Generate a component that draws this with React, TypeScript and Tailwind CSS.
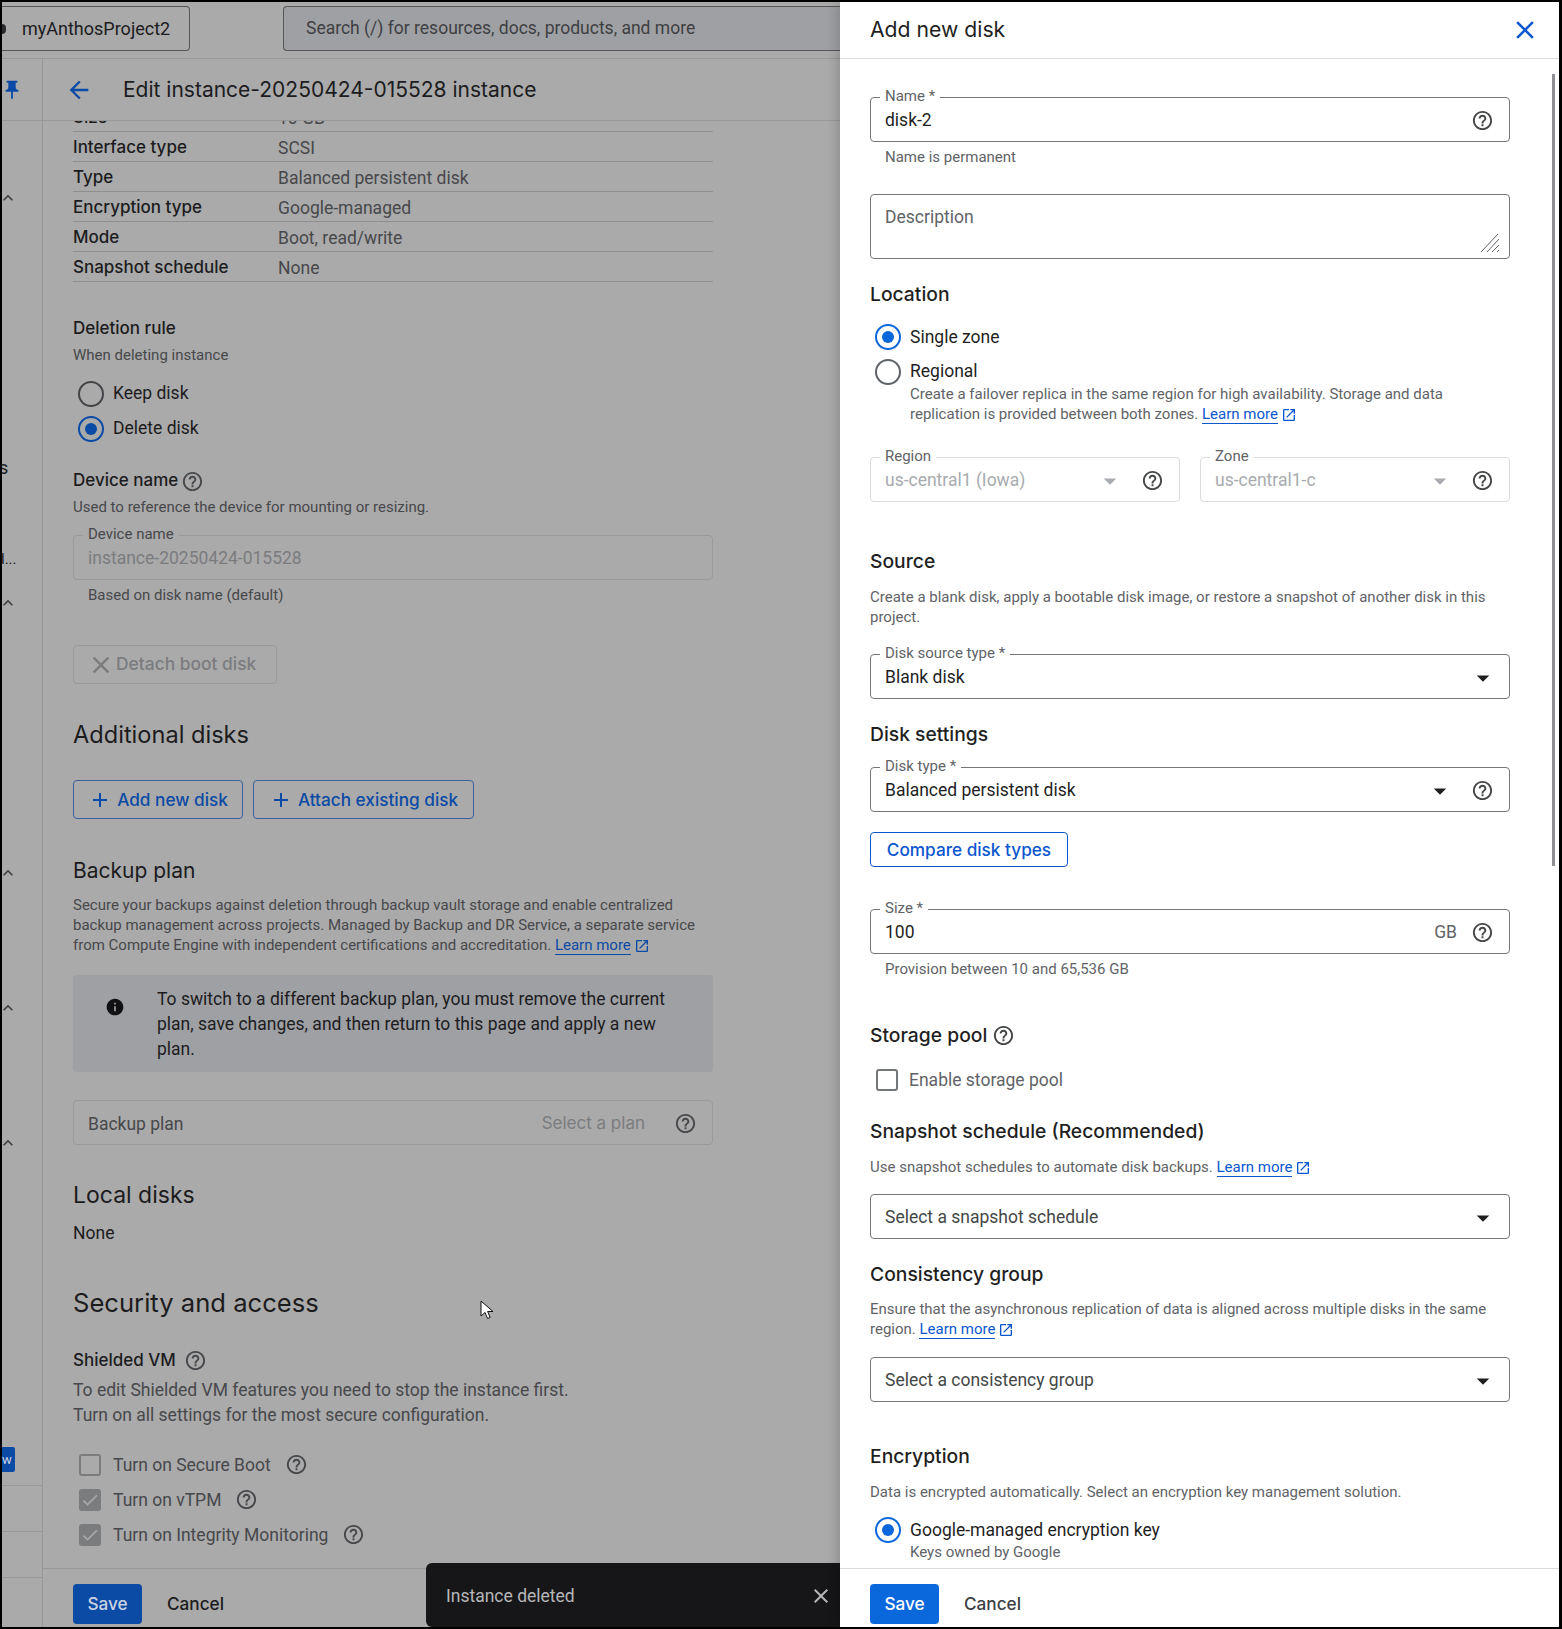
import type { ReactNode } from "react"
import {
  MdAdd,
  MdArrowBack,
  MdArrowDropDown,
  MdCheck,
  MdClose,
  MdExpandLess,
  MdHelpOutline,
  MdInfo,
  MdOpenInNew,
  MdPushPin,
} from "react-icons/md"

function Field({
  label,
  children,
  height = "h-[45px]",
  border = "border-[#74777a]",
  labelColor = "text-[#5f6368]",
  labelBg = "bg-white",
}: {
  label?: string
  children: ReactNode
  height?: string
  border?: string
  labelColor?: string
  labelBg?: string
}) {
  return (
    <div className={`relative flex items-center rounded border pt-[2px] pr-[15px] pl-[14px] ${height} ${border}`}>
      {label && (
        <span className={`absolute -top-[12px] left-[9px] px-[5px] text-[15px] leading-[20px] ${labelBg} ${labelColor}`}>
          {label}
        </span>
      )}
      {children}
    </div>
  )
}

function Radio({ checked, dim }: { checked?: boolean; dim?: boolean }) {
  if (checked) {
    return (
      <span className={`flex h-[26px] w-[26px] shrink-0 items-center justify-center rounded-full border-[2px] ${dim ? "border-[#0b4aa5]" : "border-[#0b67dc]"}`}>
        <span className={`h-[12px] w-[12px] rounded-full ${dim ? "bg-[#0b4aa5]" : "bg-[#0b67dc]"}`} />
      </span>
    )
  }
  return <span className={`h-[26px] w-[26px] shrink-0 rounded-full border-[2px] ${dim ? "border-[#444548]" : "border-[#5f6368]"}`} />
}

function LearnMore({ dim }: { dim?: boolean }) {
  const color = dim ? "text-[#0b4aa5]" : "text-[#0b57d0]"
  return (
    <span className={`inline-flex items-center ${color}`}>
      <span className={`border-b leading-[17px] ${dim ? "border-[#0b4aa5]" : "border-[#0b57d0]"}`}>Learn more</span>
      <MdOpenInNew className="ml-[3px] text-[16px]" />
    </span>
  )
}

const DISK_ROWS = [
  ["Size", "10 GB"],
  ["Interface type", "SCSI"],
  ["Type", "Balanced persistent disk"],
  ["Encryption type", "Google-managed"],
  ["Mode", "Boot, read/write"],
  ["Snapshot schedule", "None"],
]

function Sidebar() {
  const chevron = "-ml-[4px] h-5 shrink-0 text-[20px] text-[#3f4043]"
  return (
    <div className="flex w-[41px] shrink-0 flex-col overflow-hidden border-r border-[#979797] text-[#1c1c1e]">
      <div className="flex h-[62px] items-center border-b border-[#979797]">
        <MdPushPin className="-ml-[1px] text-[22px] text-[#0b4aa5]" />
      </div>
      <MdExpandLess className={`mt-[67px] ${chevron}`} />
      <div className="mt-[250px] -ml-[3px] h-5 text-[18px] leading-5">s</div>
      <div className="mt-[71px] -ml-[1px] h-5 text-[15px] leading-5">l...</div>
      <MdExpandLess className={`mt-[24px] ${chevron}`} />
      <MdExpandLess className={`mt-[250px] ${chevron}`} />
      <MdExpandLess className={`mt-[115px] ${chevron}`} />
      <MdExpandLess className={`mt-[115px] ${chevron}`} />
      <div className="mt-[294px] flex h-[25px] w-[13px] items-center rounded-r-[2px] bg-[#0b4aa5] text-[13px] text-[#c9d3e4]">w</div>
      <div className="mt-[13px] h-px bg-[#979797]" />
      <div className="mt-[45px] h-px bg-[#979797]" />
      <div className="mt-[45px] h-px bg-[#979797]" />
    </div>
  )
}

function LeftContent() {
  const sub = "text-[15px] leading-5 text-[#47484b]"
  const label = "font-['Inter',sans-serif] text-[17px] font-medium"
  return (
    <div className="-mt-[19px] w-[640px] text-[17.5px] text-[#1c1c1e]">
      {DISK_ROWS.map(([k, v]) => (
        <div key={k} className="flex h-[30px] items-center border-b border-[#8f8f8f]">
          <span className={`w-[205px] pt-[2px] ${label}`}>{k}</span>
          <span className="pt-[4px] text-[#47484b]">{v}</span>
        </div>
      ))}
      <div className={`mt-[34px] h-6 leading-6 ${label}`}>Deletion rule</div>
      <div className={`mt-[5px] ${sub}`}>When deleting instance</div>
      <div className="mt-[11px] flex h-[35px] items-center gap-[9px] pl-[5px]">
        <Radio dim />
        <span>Keep disk</span>
      </div>
      <div className="flex h-[35px] items-center gap-[9px] pl-[5px]">
        <Radio checked dim />
        <span>Delete disk</span>
      </div>
      <div className={`mt-[23px] flex h-6 items-center gap-[3px] ${label}`}>
        Device name <MdHelpOutline className="text-[23px] text-[#47484b]" />
      </div>
      <div className={`mt-[4px] ${sub}`}>Used to reference the device for mounting or resizing.</div>
      <div className="mt-[18px]">
        <Field label="Device name" border="border-[#9a9a9a]" labelBg="bg-[#aaaaaa]" labelColor="text-[#47484b]">
          <span className="text-[#7b7c7e]">instance-20250424-015528</span>
        </Field>
      </div>
      <div className={`mt-[5px] pl-[15px] ${sub}`}>Based on disk name (default)</div>
      <div className="mt-[40px] flex h-[39px] w-[204px] items-center gap-[1px] rounded border border-[#9a9a9a] pl-[13px] font-['Inter',sans-serif] text-[17.4px] font-medium text-[#7b7c7e]">
        <MdClose className="text-[28px]" /> Detach boot disk
      </div>
      <div className="mt-[35px] h-8 font-['Inter',sans-serif] text-[23.6px] leading-8">Additional disks</div>
      <div className="mt-[29px] flex gap-[10px] font-['Inter',sans-serif] text-[17.2px] font-medium text-[#0b4aa5]">
        <div className="flex h-[39px] w-[170px] items-center justify-center gap-[5px] rounded border border-[#3a619c]">
          <MdAdd className="text-[24px]" /> Add new disk
        </div>
        <div className="flex h-[39px] w-[221px] items-center justify-center gap-[5px] rounded border border-[#3a619c]">
          <MdAdd className="text-[24px]" /> Attach existing disk
        </div>
      </div>
      <div className="mt-[36px] h-8 font-['Inter',sans-serif] text-[21px] leading-8">Backup plan</div>
      <div className="mt-[9px] text-[15px] leading-[19.8px] text-[#47484b]">
        Secure your backups against deletion through backup vault storage and enable centralized backup management across projects. Managed by Backup and DR Service, a separate service from Compute Engine with independent certifications and accreditation. <LearnMore dim />
      </div>
      <div className="mt-[20px] flex h-[97px] rounded bg-[#9fa0a4] py-[12px] pr-[30px] pl-[32px] leading-[25px]">
        <MdInfo className="mt-[10px] mr-[32px] shrink-0 text-[20px] text-[#111113]" />
        <span>To switch to a different backup plan, you must remove the current plan, save changes, and then return to this page and apply a new plan.</span>
      </div>
      <div className="mt-[28px]">
        <Field border="border-[#9a9a9a]">
          <span className="flex-1 text-[#47484b]">Backup plan</span>
          <span className="mr-[29px] font-['Inter',sans-serif] text-[17px] text-[#7b7c7e]">Select a plan</span>
          <MdHelpOutline className="text-[23px] text-[#47484b]" />
        </Field>
      </div>
      <div className="mt-[34px] h-8 font-['Inter',sans-serif] text-[23px] leading-8">Local disks</div>
      <div className="mt-[10px] h-6 leading-6">None</div>
      <div className="mt-[38px] h-10 font-['Inter',sans-serif] text-[25.6px] leading-10">Security and access</div>
      <div className={`mt-[25px] flex h-6 items-center gap-[8px] ${label}`}>
        Shielded VM <MdHelpOutline className="text-[23px] text-[#47484b]" />
      </div>
      <div className="mt-[6px] leading-[25px] text-[#47484b]">
        <div>To edit Shielded VM features you need to stop the instance first.</div>
        <div>Turn on all settings for the most secure configuration.</div>
      </div>
      <div className="mt-[19px] flex h-[35px] items-center gap-[12px] pl-[6px] text-[#47484b]">
        <span className="h-[22px] w-[22px] rounded-[3px] border-[2px] border-[#7b7c7e]" />
        Turn on Secure Boot
        <MdHelpOutline className="ml-[2px] text-[23px]" />
      </div>
      {["Turn on vTPM", "Turn on Integrity Monitoring"].map((t) => (
        <div key={t} className="flex h-[35px] items-center gap-[12px] pl-[6px] text-[#47484b]">
          <span className="flex h-[22px] w-[22px] items-center justify-center rounded-[3px] bg-[#7b7c7e]">
            <MdCheck className="text-[20px] text-[#aaaaaa]" />
          </span>
          {t}
          <MdHelpOutline className="ml-[2px] text-[23px]" />
        </div>
      ))}
    </div>
  )
}

function LeftSide() {
  return (
    <div className="relative flex w-[838px] shrink-0 flex-col bg-[#aaaaaa]">
      <div className="flex h-[57px] shrink-0 gap-[93px] border-b border-[#979797] pt-[4px] text-[17.5px]">
        <div className="flex h-[45px] w-[188px] items-center rounded-r border-y border-r border-[#555658] text-[18px] text-[#1c1c1e]">
          <span className="h-[10px] w-[4px] rounded-r-full bg-[#2a2a2c]" />
          <span className="ml-[16px]">myAnthosProject2</span>
        </div>
        <div className="flex h-[45px] flex-1 items-center rounded-l border-y border-l border-[#555658] bg-[#9fa0a3] pl-[22px] text-[#3e3f42]">
          Search (/) for resources, docs, products, and more
        </div>
      </div>
      <div className="flex min-h-0 flex-1">
        <Sidebar />
        <div className="flex min-w-0 flex-1 flex-col">
          <div className="flex h-[62px] shrink-0 items-center border-b border-[#979797] pl-[22px]">
            <MdArrowBack className="text-[28px] text-[#0b4aa5]" />
            <span className="ml-[30px] font-['Inter',sans-serif] text-[21px] text-[#1c1c1e]">Edit instance-20250424-015528 instance</span>
          </div>
          <div className="min-h-0 flex-1 overflow-hidden pl-[30px]">
            <LeftContent />
          </div>
          <div className="flex h-[59px] shrink-0 items-start border-t border-[#979797] pt-[15px] pl-[30px] font-['Inter',sans-serif] text-[17.2px] font-medium">
            <div className="flex h-[40px] w-[69px] items-center justify-center rounded bg-[#0b4aa5] text-[#c9d3e4]">Save</div>
            <div className="ml-[25px] flex h-[40px] items-center text-[#1c1c1e]">Cancel</div>
          </div>
        </div>
      </div>
      <div className="absolute top-[1561px] left-[424px] flex h-[64px] w-[414px] items-center justify-between rounded-l-[6px] bg-[#161618] pt-[2px] pr-[7px] pl-[20px] text-[17.5px] text-[#b6b6b8]">
        Instance deleted
        <MdClose className="text-[24px]" />
      </div>
      <svg className="absolute top-[1298px] left-[478px] h-[20px] w-[14px]" viewBox="0 0 14 20">
        <path d="M1 1v15l4-3.5 2.6 6 2.6-1.1-2.6-5.9H13z" fill="#fff" stroke="#111" strokeWidth="1" />
      </svg>
    </div>
  )
}

function RightSide() {
  const heading = "h-7 font-['Inter',sans-serif] text-[19.3px] font-medium leading-7 text-[#1f1f1f]"
  const sub = "text-[15px] leading-5 text-[#5f6368]"
  const help = <MdHelpOutline className="text-[23px] text-[#444746]" />
  const drop = <MdArrowDropDown className="-mr-[4px] text-[30px] text-[#1f1f1f]" />
  return (
    <div className="relative z-10 flex min-w-0 flex-1 flex-col bg-white text-[17.5px] text-[#1f1f1f] shadow-[-4px_0_10px_rgba(0,0,0,0.15)]">
      <div className="flex h-[57px] shrink-0 items-center justify-between border-b border-[#dadce0] pr-[19px] pl-[30px]">
        <span className="font-['Inter',sans-serif] text-[21.2px]">Add new disk</span>
        <MdClose className="text-[30px] text-[#0b57d0]" />
      </div>
      <div className="relative min-h-0 flex-1 overflow-hidden px-[30px]">
        <div className="absolute top-[15px] right-[4px] h-[792px] w-[3px] bg-[#8e9093]" />
        <div className="w-[640px]">
          <div className="mt-[38px]">
            <Field label="Name *">
              <span className="flex-1 text-[#1f1f1f]">disk-2</span>
              {help}
            </Field>
          </div>
          <div className={`mt-[5px] pl-[15px] ${sub}`}>Name is permanent</div>
          <div className="relative mt-[27px] h-[65px] rounded border border-[#74777a] px-[14px] pt-[9px] text-[#5f6368]">
            Description
            <svg className="absolute right-[10px] bottom-[6px] h-[18px] w-[18px]" viewBox="0 0 18 18" stroke="#5f6368" strokeWidth="1">
              <path d="M0 18L17 0M6 18L18 5M11 18L18 11M16 18L18 16" />
            </svg>
          </div>
          <div className={`mt-[21px] ${heading}`}>Location</div>
          <div className="mt-[12px] flex h-[34px] items-center gap-[9px] pl-[5px]">
            <Radio checked />
            <span>Single zone</span>
          </div>
          <div className="mt-[4px] flex h-[27px] items-center gap-[9px] pl-[5px]">
            <Radio />
            <span>Regional</span>
          </div>
          <div className="pl-[40px] text-[15px] leading-[19.5px] text-[#5f6368]">
            Create a failover replica in the same region for high availability. Storage and data replication is provided between both zones. <LearnMore />
          </div>
          <div className="mt-[33px] flex gap-[20px]">
            <div className="flex-1">
              <Field label="Region" border="border-[#dadce0]">
                <span className="flex-1 text-[#a8abaf]">us-central1 (Iowa)</span>
                <MdArrowDropDown className="mr-[16px] text-[30px] text-[#a8abaf]" />
                {help}
              </Field>
            </div>
            <div className="flex-1">
              <Field label="Zone" border="border-[#dadce0]">
                <span className="flex-1 text-[#a8abaf]">us-central1-c</span>
                <MdArrowDropDown className="mr-[16px] text-[30px] text-[#a8abaf]" />
                {help}
              </Field>
            </div>
          </div>
          <div className={`mt-[45px] ${heading}`}>Source</div>
          <div className="mt-[13px] text-[15px] leading-[19.5px] text-[#5f6368]">
            Create a blank disk, apply a bootable disk image, or restore a snapshot of another disk in this project.
          </div>
          <div className="mt-[27px]">
            <Field label="Disk source type *">
              <span className="flex-1">Blank disk</span>
              {drop}
            </Field>
          </div>
          <div className={`mt-[21px] ${heading}`}>Disk settings</div>
          <div className="mt-[19px]">
            <Field label="Disk type *">
              <span className="flex-1">Balanced persistent disk</span>
              <MdArrowDropDown className="mr-[16px] text-[30px] text-[#1f1f1f]" />
              {help}
            </Field>
          </div>
          <div className="mt-[20px] flex h-[35px] w-[198px] items-center justify-center rounded border border-[#0b57d0] font-['Inter',sans-serif] text-[17.2px] font-medium text-[#0b57d0]">
            Compare disk types
          </div>
          <div className="mt-[42px]">
            <Field label="Size *">
              <span className="flex-1">100</span>
              <span className="mr-[14px] text-[#5f6368]">GB</span>
              {help}
            </Field>
          </div>
          <div className={`mt-[5px] pl-[15px] ${sub}`}>Provision between 10 and 65,536 GB</div>
          <div className={`mt-[42px] flex items-center gap-[5px] ${heading}`}>Storage pool {help}</div>
          <div className="mt-[14px] flex h-[34px] items-center gap-[11px] pl-[6px] text-[#5f6368]">
            <span className="h-[22px] w-[22px] rounded-[3px] border-[2px] border-[#74777a]" />
            Enable storage pool
          </div>
          <div className={`mt-[20px] ${heading}`}>Snapshot schedule (Recommended)</div>
          <div className={`mt-[12px] ${sub}`}>
            Use snapshot schedules to automate disk backups. <LearnMore />
          </div>
          <div className="mt-[17px]">
            <Field>
              <span className="flex-1 text-[#444746]">Select a snapshot schedule</span>
              {drop}
            </Field>
          </div>
          <div className={`mt-[21px] ${heading}`}>Consistency group</div>
          <div className="mt-[12px] text-[15px] leading-[19.5px] text-[#5f6368]">
            Ensure that the asynchronous replication of data is aligned across multiple disks in the same region. <LearnMore />
          </div>
          <div className="mt-[18px]">
            <Field>
              <span className="flex-1 text-[#444746]">Select a consistency group</span>
              {drop}
            </Field>
          </div>
          <div className={`mt-[40px] ${heading}`}>Encryption</div>
          <div className={`mt-[12px] ${sub}`}>Data is encrypted automatically. Select an encryption key management solution.</div>
          <div className="mt-[16px] flex h-[24px] items-center gap-[9px] pl-[5px]">
            <Radio checked />
            <span>Google-managed encryption key</span>
          </div>
          <div className={`pl-[40px] ${sub}`}>Keys owned by Google</div>
        </div>
      </div>
      <div className="flex h-[59px] shrink-0 items-start border-t border-[#dadce0] pt-[15px] pl-[30px] font-['Inter',sans-serif] text-[17.2px] font-medium">
        <div className="flex h-[40px] w-[69px] items-center justify-center rounded bg-[#0b67dc] text-white">Save</div>
        <div className="ml-[25px] flex h-[40px] items-center text-[#3c4043]">Cancel</div>
      </div>
    </div>
  )
}

export default function App() {
  return (
    <div className="flex h-[1629px] w-[1562px] overflow-hidden bg-black py-[2px] pr-[3px] pl-[2px] font-[Roboto,sans-serif]">
      <LeftSide />
      <RightSide />
    </div>
  )
}
